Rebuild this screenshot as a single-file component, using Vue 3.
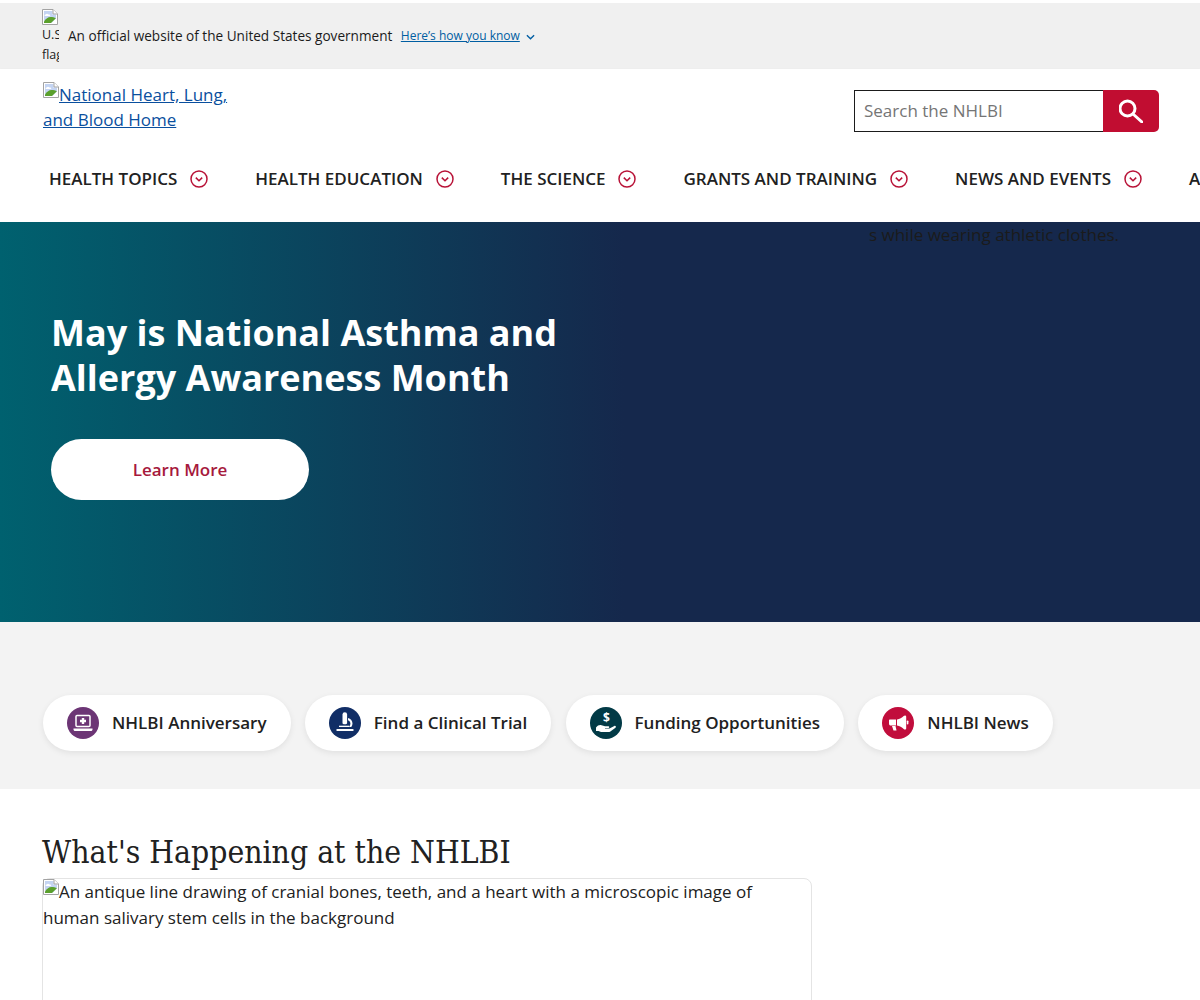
<template>
  <div class="page">
    <div class="gov-banner">
      <div class="gov-banner__flag">
        <svg class="broken" viewBox="0 0 16 16" width="16" height="16"><use href="#broken-img" /></svg>
        <span>U.S. flag</span>
      </div>
      <span class="gov-banner__text">An official website of the United States government</span>
      <a class="gov-banner__link" href="#">Here’s how you know</a>
      <svg class="gov-banner__chev" viewBox="0 0 10 6" width="9" height="6"><path d="M1 1l4 4 4-4" fill="none" stroke="#005ea2" stroke-width="1.5" /></svg>
    </div>

    <svg width="0" height="0" class="defs">
      <symbol id="broken-img" viewBox="0 0 16 16">
        <path d="M.5.5h10.500l4.500 4.500v10.500h-15z" fill="#fff" stroke="#a3a3a3" />
        <path d="M2 2h8.500v3.500H14V14H2z" fill="#c4d4f2" />
        <path d="M2 14V12.500C4 9.500 6 8 8.500 8c2 0 4 .4 5.500 1.200L9 14z" fill="#5aa02c" />
        <path d="M14 9.500V14H9.500z" fill="#fff" />
        <path d="M3.500 5.500c1-1 2-1 3 0h1c1 .5 1 1.500 0 1.500h-4.500c-.8 0-.5-1.500.5-1.500z" fill="#fff" />
        <path d="M11 .5v4.500h4.500" fill="#fff" stroke="#a3a3a3" />
      </symbol>
    </svg>

    <header class="site-header">
      <div class="site-header__top">
        <a class="logo" href="#"><svg class="broken" viewBox="0 0 16 16" width="16" height="16"><use href="#broken-img" /></svg>National Heart, Lung, and Blood Home</a>
        <form class="search" @submit.prevent>
          <input class="search__input" type="text" placeholder="Search the NHLBI" />
          <button class="search__btn" type="button" aria-label="Search">
            <svg viewBox="0 0 24 24" width="24" height="24" fill="none" stroke="#fff" stroke-width="3" stroke-linecap="round">
              <circle cx="8.500" cy="9.500" r="7.500" />
              <path d="M14 15l9 8" />
            </svg>
          </button>
        </form>
      </div>
      <nav class="nav">
        <a v-for="item in navItems" :key="item" class="nav__item" href="#">
          <span>{{ item }}</span>
          <svg viewBox="0 0 18 18" width="18" height="18" fill="none" stroke="#b81237" stroke-width="1.500">
            <circle cx="9" cy="9" r="8" />
            <path d="M5.800 7.600L9 10.800l3.200-3.200" />
          </svg>
        </a>
      </nav>
    </header>

    <section class="hero">
      <span class="hero__stray">s while wearing athletic clothes.</span>
      <h1 class="hero__title">May is National Asthma and<br />Allergy Awareness Month</h1>
      <a class="hero__btn" href="#">Learn More</a>
    </section>

    <section class="quick">
      <a class="pill" href="#">
        <span class="pill__icon pill__icon--purple">
          <svg viewBox="0 0 32 32" width="32" height="32">
            <rect x="9" y="8.500" width="14" height="11" rx="1" fill="none" stroke="#fff" stroke-width="1.500" />
            <path d="M14.800 11h2.400v1.800H19v2.400h-1.800V17h-2.400v-1.800H13v-2.400h1.800z" fill="#fff" />
            <path d="M6.500 21.500h19v1c0 .8-.7 1.500-1.500 1.500H8c-.8 0-1.500-.7-1.500-1.500z" fill="#fff" />
          </svg>
        </span>
        <span class="pill__label">NHLBI Anniversary</span>
      </a>
      <a class="pill" href="#">
        <span class="pill__icon pill__icon--navy">
          <svg viewBox="0 0 32 32" width="32" height="32">
            <path d="M13.500 7.500a2.300 2.300 0 0 1 4.600 0V16c0 .7-.5 1.200-1.200 1.200h-2.200c-.7 0-1.200-.5-1.200-1.200z" fill="#fff" />
            <path d="M19 11c2.800.8 4.500 3 4.500 5.500 0 1.300-.4 2.500-1.200 3.500h-2.500c1-1 1.600-2.200 1.600-3.500 0-1.500-1-2.700-2.400-3.200z" fill="#fff" />
            <rect x="10" y="18.700" width="10" height="1.300" fill="#fff" />
            <rect x="7.500" y="22" width="17" height="2" rx=".6" fill="#fff" />
          </svg>
        </span>
        <span class="pill__label">Find a Clinical Trial</span>
      </a>
      <a class="pill" href="#">
        <span class="pill__icon pill__icon--teal">
          <svg viewBox="0 0 32 32" width="32" height="32">
            <text x="16.500" y="15" text-anchor="middle" class="pill__dollar">$</text>
            <path d="M6 20.500c1.500-2 3.500-2.800 5.500-2.300l3.500 1h3.500c1 0 1 1.800 0 1.800H15v.6h4.500l4.800-2.600c1.300-.6 2.200.9 1.200 1.700l-5.500 4c-.5.300-1 .4-1.500.4H11l-2.500-1.200H6z" fill="#fff" />
          </svg>
        </span>
        <span class="pill__label">Funding Opportunities</span>
      </a>
      <a class="pill" href="#">
        <span class="pill__icon pill__icon--red">
          <svg viewBox="0 0 32 32" width="32" height="32">
            <path d="M23 8.500c.8 0 1.200.6 1.200 1.300v11.400c0 .7-.4 1.300-1.200 1.300-.5 0-.9-.2-1.300-.6-1.800-1.800-4-3-6.700-3.400v-6c2.700-.4 4.900-1.600 6.700-3.400.4-.4.800-.6 1.300-.6z" fill="#fff" />
            <path d="M8 12.500h6v6H8.800C7.800 18.500 7 17.700 7 16.700v-3.200c0-.6.400-1 1-1z" fill="#fff" />
            <path d="M10 19h3.500l1 4.500h-3z" fill="#fff" />
            <rect x="24.800" y="13.500" width="1.600" height="4" rx=".8" fill="#fff" />
          </svg>
        </span>
        <span class="pill__label">NHLBI News</span>
      </a>
    </section>

    <section class="happening">
      <h2 class="happening__title">What's Happening at the NHLBI</h2>
      <div class="card">
        <svg class="broken" viewBox="0 0 16 16" width="16" height="16"><use href="#broken-img" /></svg>An antique line drawing of cranial bones, teeth, and a heart with a microscopic image of human salivary stem cells in the background
      </div>
    </section>
  </div>
</template>

<script setup>
const navItems = [
  'Health Topics',
  'Health Education',
  'The Science',
  'Grants and Training',
  'News and Events',
  'About',
]
</script>

<style>
html,
body {
  margin: 0;
  height: 1000px;
  overflow: hidden;
  background: #fff;
}
</style>

<style scoped>
.page {
  width: 1200px;
  height: 1000px;
  overflow: hidden;
  font-family: 'Open Sans', sans-serif;
  color: #212121;
}
.defs {
  position: absolute;
}
.broken {
  display: inline-block;
  vertical-align: 3px;
}
.gov-banner {
  margin-top: 3px;
  height: 66px;
  box-sizing: border-box;
  background: #f0f0f0;
  display: flex;
  align-items: center;
  padding-left: 42px;
  padding-bottom: 2px;
  font-size: 13.600px;
}
.gov-banner__flag {
  width: 17px;
  height: 54px;
  overflow: hidden;
  font-size: 12.500px;
  line-height: 20px;
  margin: 1px 9px 0 0;
}
.gov-banner__flag .broken {
  display: block;
}
.gov-banner__flag span {
  display: block;
  width: 17px;
}
.gov-banner__text {
  color: #1b1b1b;
}
.gov-banner__link {
  margin-left: 8.500px;
  font-size: 12px;
  color: #005ea2;
}
.gov-banner__chev {
  margin-left: 6px;
  margin-top: 3px;
}
.site-header {
  background: #fff;
  height: 153px;
  position: relative;
  box-shadow: 0 1px 2px rgba(0, 0, 0, 0.12);
}
.site-header__top {
  display: flex;
  justify-content: space-between;
  padding: 13px 41px 0 43px;
  height: 70px;
  box-sizing: border-box;
}
.logo {
  width: 190px;
  font-size: 17px;
  line-height: 25px;
  color: #0a4f9e;
  text-decoration: underline;
}
.search {
  display: flex;
  margin-top: 8px;
  height: 42px;
}
.search__input {
  width: 249px;
  box-sizing: border-box;
  height: 42px;
  border: 1px solid #1b1b1b;
  border-right: 0;
  padding: 0 9px 2px;
  font: 17px 'Open Sans', sans-serif;
  outline: none;
  border-radius: 0;
}
.search__input::placeholder {
  color: #757575;
  opacity: 1;
}
.search__btn {
  width: 56px;
  height: 42px;
  border: 0;
  padding: 0;
  background: #c10d31;
  border-radius: 0 5px 5px 0;
  display: flex;
  align-items: center;
  justify-content: center;
}
.nav {
  display: flex;
  gap: 47.300px;
  padding: 30px 0 0 49px;
  height: 83px;
  align-items: flex-start;
  box-sizing: border-box;
  white-space: nowrap;
}
.nav__item {
  display: flex;
  align-items: center;
  gap: 12.700px;
  font-size: 17px;
  font-weight: 600;
  line-height: 20px;
  text-transform: uppercase;
  color: #212121;
  text-decoration: none;
}
.hero {
  height: 400px;
  box-sizing: border-box;
  position: relative;
  padding: 88px 0 0 51px;
  background: linear-gradient(90deg, #00616f 0%, #15284c 52%, #15284c 100%);
}
.hero__stray {
  position: absolute;
  left: 869px;
  top: 0;
  white-space: nowrap;
  font-size: 17px;
  line-height: 25px;
  color: #1b1b1b;
}
.hero__title {
  margin: 0;
  font-size: 36px;
  line-height: 45px;
  font-weight: 700;
  color: #fff;
}
.hero__btn {
  margin-top: 39px;
  width: 258px;
  height: 61px;
  border-radius: 31px;
  background: #fff;
  display: flex;
  align-items: center;
  justify-content: center;
  color: #a6193c;
  font-size: 17px;
  font-weight: 600;
  text-decoration: none;
}
.quick {
  height: 167px;
  box-sizing: border-box;
  background: #f3f3f3;
  padding: 73px 0 0 43px;
  display: flex;
  gap: 14.300px;
}
.pill {
  height: 56px;
  box-sizing: border-box;
  padding: 0 24px;
  border-radius: 28px;
  background: #fff;
  box-shadow: 0 2px 6px rgba(0, 0, 0, 0.08);
  display: flex;
  align-items: center;
  gap: 13px;
  font-size: 17px;
  font-weight: 600;
  color: #212121;
  text-decoration: none;
  white-space: nowrap;
}
.pill__label {
  margin-top: -2px;
}
.pill__icon {
  width: 32px;
  height: 32px;
  border-radius: 50%;
  display: block;
}
.pill__icon svg {
  display: block;
}
.pill__icon--purple {
  background: #6c3575;
}
.pill__icon--navy {
  background: #112e66;
}
.pill__icon--teal {
  background: #023a46;
}
.pill__icon--red {
  background: #c10d3c;
}
.pill__dollar {
  font: 700 12px 'Open Sans', sans-serif;
  fill: #fff;
}
.happening {
  padding: 43px 0 0 42px;
}
.happening__title {
  margin: 0 0 6px;
  font-family: 'DejaVu Serif', serif;
  font-stretch: condensed;
  font-size: 31.600px;
  line-height: 40px;
  font-weight: 400;
  color: #212121;
}
.card {
  width: 770px;
  height: 200px;
  box-sizing: border-box;
  border: 1px solid #e4e4e4;
  border-radius: 8px;
  font-size: 17px;
  line-height: 26px;
  color: #212121;
}
</style>
